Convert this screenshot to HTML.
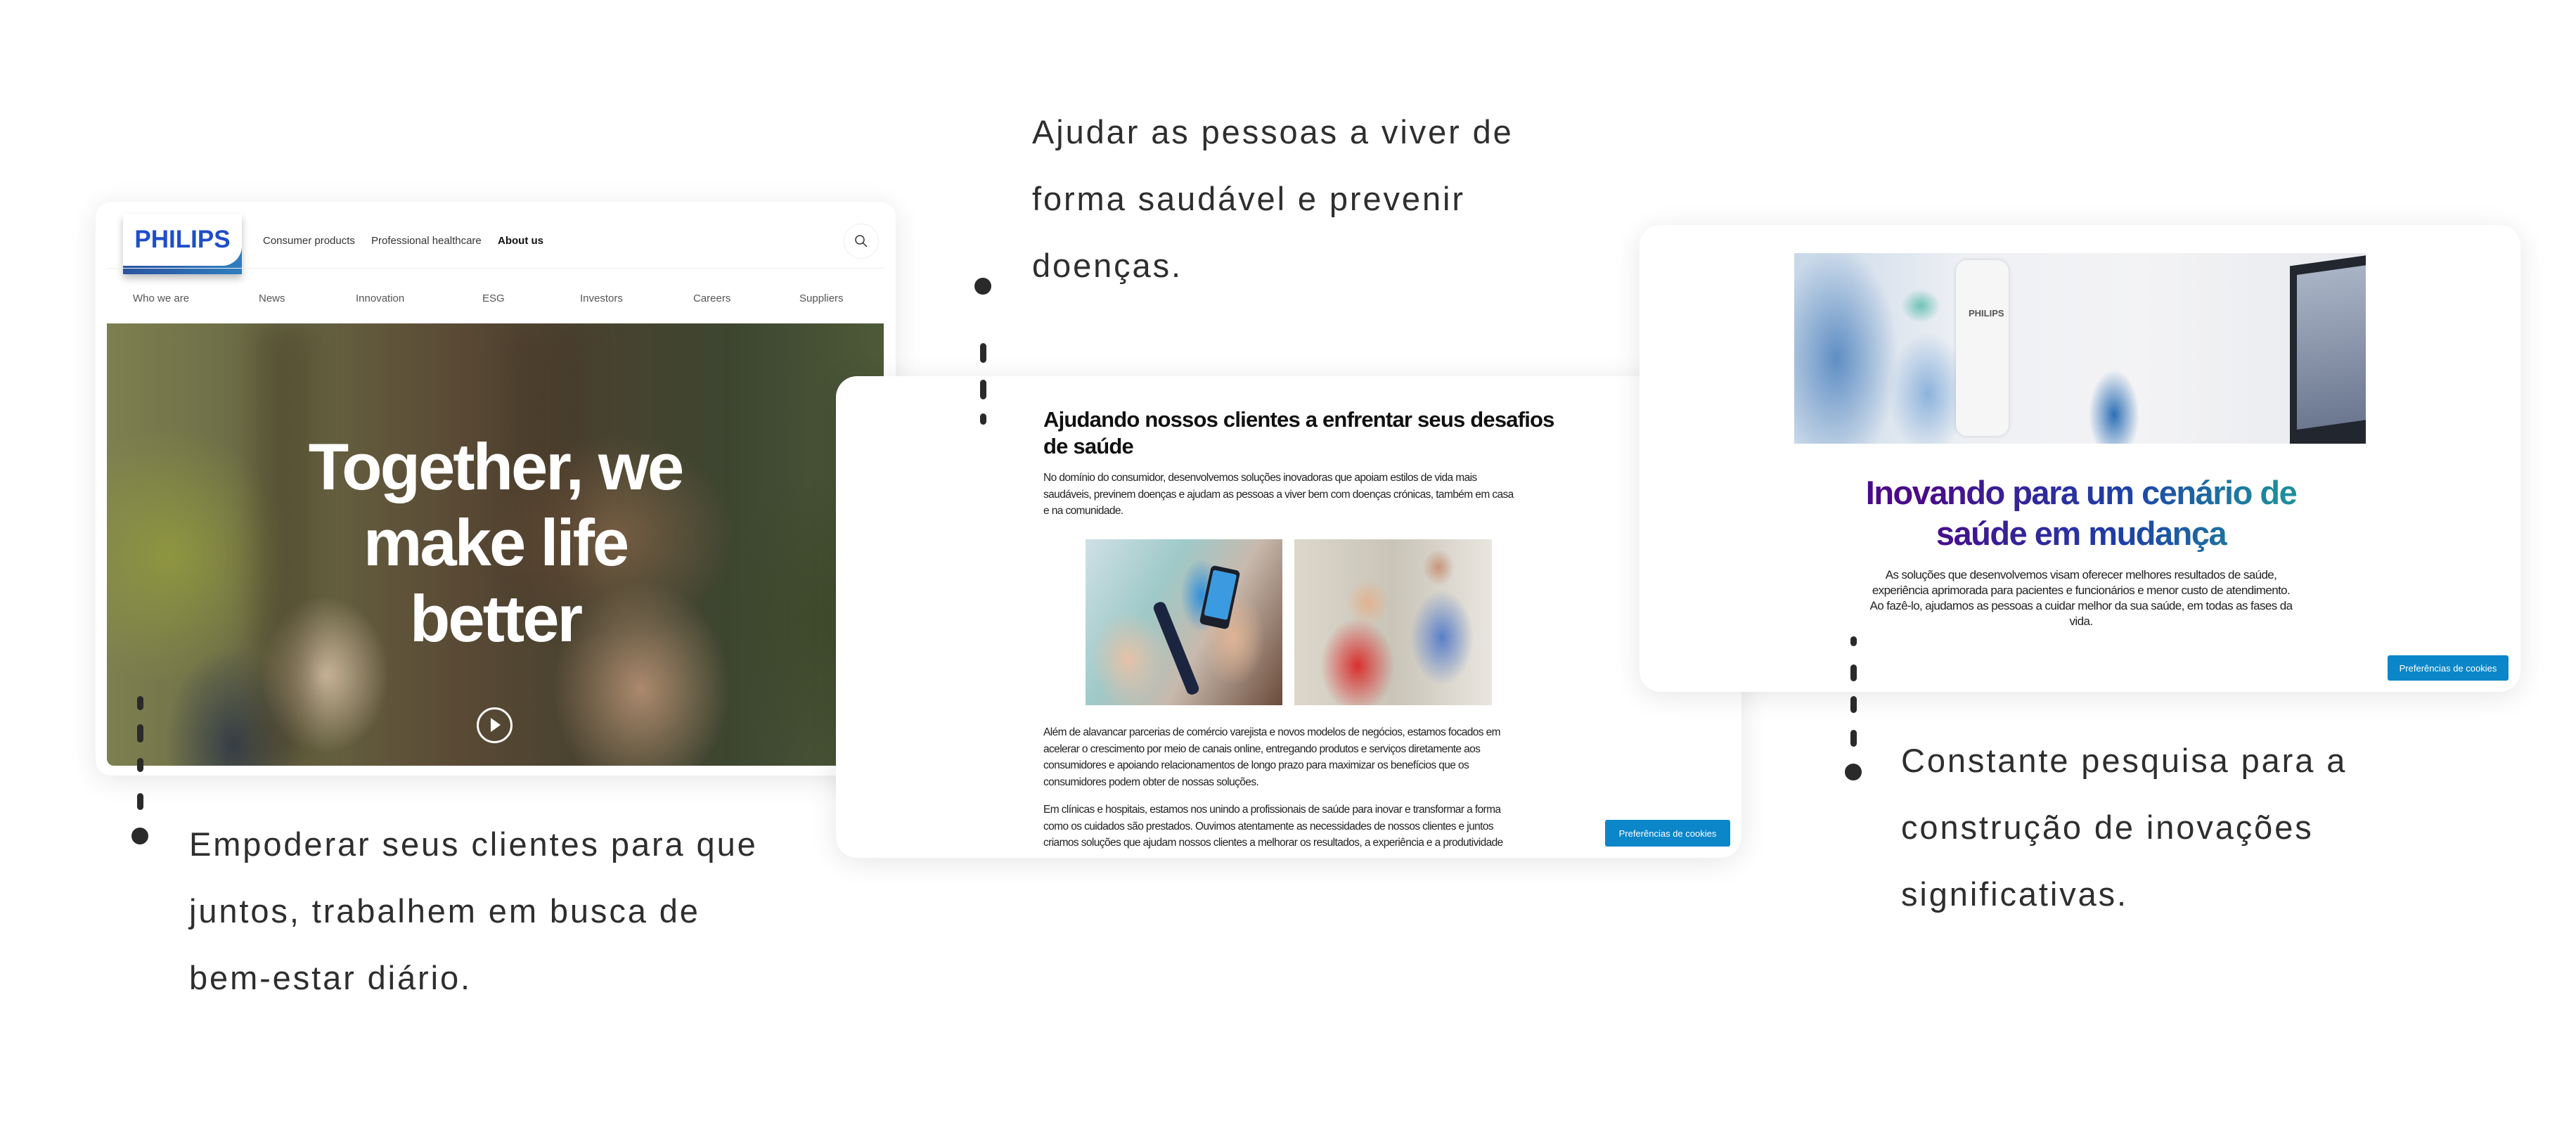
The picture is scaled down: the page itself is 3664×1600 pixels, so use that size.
<!DOCTYPE html>
<html><head><meta charset="utf-8"><style>
*{margin:0;padding:0;box-sizing:border-box}
body{width:3664px;height:1600px;background:#fff;position:relative;overflow:hidden;font-family:"Liberation Sans",sans-serif}
.a{position:absolute}
.card{position:absolute;background:#fff;border-radius:30px;box-shadow:0 6px 40px rgba(0,0,0,.10)}
.note{position:absolute;font-size:47px;color:#2e2e2e;line-height:95px;letter-spacing:2.9px;white-space:nowrap}
.dash{position:absolute;width:9px;border-radius:5px;background:#2a2a2a}
.dot{position:absolute;width:24px;height:24px;border-radius:50%;background:#2a2a2a}
.nav{position:absolute;font-size:15px;color:#333;top:334px}
.sub{position:absolute;font-size:15px;color:#555;top:416px}
.p{position:absolute;font-size:15.5px;color:#222;line-height:23.5px;letter-spacing:-.6px}
.btn{position:absolute;background:#0b86c9;color:#fff;font-size:13px;display:flex;align-items:center;justify-content:center;border-radius:3px}
</style></head><body>

<!-- Card 1 -->
<div class="card" style="left:136px;top:287px;width:1138px;height:816px;border-radius:22px">
</div>
<div class="a" style="left:175px;top:304px;width:169px;height:86px;background:linear-gradient(100deg,#2a4f9e,#2f7fbe);box-shadow:0 6px 10px rgba(0,0,0,.25)"></div>
<div class="a" style="left:175px;top:304px;width:169px;height:74px;background:#fff;border-bottom-right-radius:28px;display:flex;align-items:center;justify-content:center;font-weight:bold;font-size:35px;color:#1f4fc7;letter-spacing:0px">PHILIPS</div>
<div class="nav" style="left:374px">Consumer products</div>
<div class="nav" style="left:528px">Professional healthcare</div>
<div class="nav" style="left:708px;font-weight:bold;color:#111">About us</div>
<div class="a" style="left:1200px;top:318px;width:50px;height:50px;border-radius:50%;border:1px solid #eee"></div>
<svg class="a" style="left:1213px;top:331px" width="24" height="24" viewBox="0 0 24 24"><circle cx="10" cy="10" r="6" fill="none" stroke="#333" stroke-width="1.5"/><path d="M14.5 14.5L20 20" stroke="#333" stroke-width="1.5"/></svg>
<div class="a" style="left:152px;top:381px;width:1105px;height:1px;background:#eee"></div>
<div class="sub" style="left:189px">Who we are</div>
<div class="sub" style="left:368px">News</div>
<div class="sub" style="left:506px">Innovation</div>
<div class="sub" style="left:686px">ESG</div>
<div class="sub" style="left:825px">Investors</div>
<div class="sub" style="left:986px">Careers</div>
<div class="sub" style="left:1137px">Suppliers</div>
<div class="a" style="left:152px;top:460px;width:1105px;height:629px;border-radius:0 0 0 10px;overflow:hidden;background:
radial-gradient(ellipse 180px 220px at 760px 520px,rgba(190,150,120,.85),transparent 70%),
radial-gradient(ellipse 130px 160px at 310px 500px,rgba(230,205,180,.8),transparent 70%),
radial-gradient(ellipse 140px 200px at 180px 600px,rgba(40,50,70,.8),transparent 70%),
radial-gradient(ellipse 240px 260px at 90px 330px,rgba(150,160,60,.75),transparent 70%),
radial-gradient(ellipse 200px 300px at 1000px 420px,rgba(60,70,40,.7),transparent 70%),
radial-gradient(ellipse 250px 200px at 720px 300px,rgba(150,110,80,.6),transparent 70%),
linear-gradient(90deg,#7d8050 0%,#6a6a45 20%,#5a4a35 45%,#4a4330 60%,#3d4530 80%,#4d5a38 100%)">
<div class="a" style="left:210px;top:0;width:80px;height:629px;background:rgba(60,45,30,.35);filter:blur(20px)"></div>
<div class="a" style="left:560px;top:0;width:120px;height:400px;background:rgba(70,50,35,.35);filter:blur(25px)"></div>
</div>
<div class="a" style="left:152px;top:610px;width:1105px;text-align:center;color:#fff;font-weight:bold;font-size:94px;line-height:108px;letter-spacing:-3px">Together, we<br>make life<br>better</div>
<div class="a" style="left:678px;top:1006px;width:51px;height:51px;border-radius:50%;border:3px solid #fff"></div>
<div class="a" style="left:698px;top:1021px;width:0;height:0;border-left:14px solid #fff;border-top:10px solid transparent;border-bottom:10px solid transparent"></div>

<!-- Card 2 -->
<div class="card" style="left:1189px;top:535px;width:1288px;height:685px"></div>
<div class="a" style="left:1484px;top:578px;font-size:31px;font-weight:bold;color:#111;line-height:38px;letter-spacing:-.8px;width:760px">Ajudando nossos clientes a enfrentar seus desafios<br>de saúde</div>
<div class="p" style="left:1484px;top:668px;width:700px">No domínio do consumidor, desenvolvemos soluções inovadoras que apoiam estilos de vida mais<br>saudáveis, previnem doenças e ajudam as pessoas a viver bem com doenças crónicas, também em casa<br>e na comunidade.</div>
<div class="a" style="left:1544px;top:767px;width:280px;height:236px;background:
radial-gradient(ellipse 40px 70px at 165px 80px,#2f8fd8,transparent 75%),
radial-gradient(ellipse 70px 90px at 60px 170px,#e6c2a8,transparent 75%),
radial-gradient(ellipse 60px 90px at 210px 140px,#dfb495,transparent 75%),
linear-gradient(120deg,#cfe0e6 0%,#9ec9c8 35%,#c8b9ad 60%,#6b4b3a 100%)">
<div class="a" style="left:120px;top:85px;width:18px;height:140px;background:#1c2540;transform:rotate(-22deg);border-radius:8px"></div>
<div class="a" style="left:170px;top:40px;width:42px;height:85px;background:#1a1f2a;transform:rotate(12deg);border-radius:6px"><div style="margin:6px 4px;height:66px;background:#3c9be0;border-radius:3px"></div></div>
</div>
<div class="a" style="left:1841px;top:767px;width:281px;height:236px;background:
radial-gradient(ellipse 70px 90px at 90px 180px,#d8302f,transparent 75%),
radial-gradient(ellipse 40px 45px at 105px 90px,#e2b391,transparent 75%),
radial-gradient(ellipse 60px 90px at 210px 140px,#5a7fc8,transparent 75%),
radial-gradient(ellipse 30px 35px at 205px 40px,#c9957a,transparent 75%),
linear-gradient(90deg,#ddd8cc 0%,#c9c4b8 50%,#e9e6e0 100%)"></div>
<div class="p" style="left:1484px;top:1030px;width:720px">Além de alavancar parcerias de comércio varejista e novos modelos de negócios, estamos focados em<br>acelerar o crescimento por meio de canais online, entregando produtos e serviços diretamente aos<br>consumidores e apoiando relacionamentos de longo prazo para maximizar os benefícios que os<br>consumidores podem obter de nossas soluções.</div>
<div class="a" style="left:1189px;top:1140px;width:1288px;height:80px;overflow:hidden;border-radius:0 0 30px 30px">
<div class="p" style="left:295px;top:0;width:720px">Em clínicas e hospitais, estamos nos unindo a profissionais de saúde para inovar e transformar a forma<br>como os cuidados são prestados. Ouvimos atentamente as necessidades de nossos clientes e juntos<br>criamos soluções que ajudam nossos clientes a melhorar os resultados, a experiência e a produtividade</div>
</div>
<div class="btn" style="left:2283px;top:1166px;width:178px;height:38px">Preferências de cookies</div>

<!-- Card 3 -->
<div class="card" style="left:2332px;top:320px;width:1253px;height:664px"></div>
<div class="a" style="left:2552px;top:360px;width:813px;height:271px;overflow:hidden;background:
radial-gradient(ellipse 110px 200px at 60px 150px,#5f8ec4,transparent 80%),
radial-gradient(ellipse 70px 110px at 190px 200px,#8db3dc,transparent 80%),
radial-gradient(ellipse 35px 30px at 180px 75px,#6fc3b8,transparent 80%),
radial-gradient(ellipse 45px 80px at 455px 230px,#2d6fb5,transparent 80%),
linear-gradient(90deg,#c8d8e8 0%,#eef0f4 30%,#f3f3f5 60%,#e8eaee 100%)">
<div class="a" style="left:230px;top:10px;width:75px;height:250px;background:#f6f6f7;border-radius:16px;box-shadow:0 0 6px rgba(0,0,0,.15)"></div>
<div class="a" style="left:248px;top:78px;font-size:13px;font-weight:bold;color:#555">PHILIPS</div>
<div class="a" style="left:705px;top:10px;width:120px;height:270px;background:#22262e;transform:skewY(-8deg)"><div style="margin:14px 10px;height:220px;background:linear-gradient(#a9b3c6,#6c7890)"></div></div>
</div>
<div class="a" style="left:2400px;top:672px;width:1120px;text-align:center;font-size:47px;font-weight:bold;line-height:58px;letter-spacing:-1.5px;background:linear-gradient(90deg,#4a0a8a 30%,#1e3fa8 55%,#1e8c9c 75%);-webkit-background-clip:text;background-clip:text;color:transparent">Inovando para um cenário de<br>saúde em mudança</div>
<div class="a" style="left:2560px;top:807px;width:800px;text-align:center;font-size:17px;line-height:22px;color:#222;letter-spacing:-.6px">As soluções que desenvolvemos visam oferecer melhores resultados de saúde,<br>experiência aprimorada para pacientes e funcionários e menor custo de atendimento.<br>Ao fazê-lo, ajudamos as pessoas a cuidar melhor da sua saúde, em todas as fases da<br>vida.</div>
<div class="btn" style="left:3396px;top:932px;width:172px;height:36px">Preferências de cookies</div>

<!-- annotations -->
<div class="note" style="left:1468px;top:140px">Ajudar as pessoas a viver de<br>forma saudável e prevenir<br>doenças.</div>
<div class="dot" style="left:1386px;top:395px"></div>
<div class="dash" style="left:1394px;top:488px;height:28px"></div>
<div class="dash" style="left:1394px;top:540px;height:28px"></div>
<div class="dash" style="left:1394px;top:588px;height:16px"></div>

<div class="note" style="left:269px;top:1153px">Empoderar seus clientes para que<br>juntos, trabalhem em busca de<br>bem-estar diário.</div>
<div class="dash" style="left:195px;top:990px;height:20px"></div>
<div class="dash" style="left:195px;top:1030px;height:26px"></div>
<div class="dash" style="left:195px;top:1078px;height:20px"></div>
<div class="dash" style="left:195px;top:1128px;height:24px"></div>
<div class="dot" style="left:187px;top:1177px"></div>

<div class="note" style="left:2704px;top:1034px">Constante pesquisa para a<br>construção de inovações<br>significativas.</div>
<div class="dash" style="left:2632px;top:905px;height:14px"></div>
<div class="dash" style="left:2632px;top:945px;height:24px"></div>
<div class="dash" style="left:2632px;top:990px;height:24px"></div>
<div class="dash" style="left:2632px;top:1038px;height:24px"></div>
<div class="dot" style="left:2624px;top:1086px"></div>
</body></html>
